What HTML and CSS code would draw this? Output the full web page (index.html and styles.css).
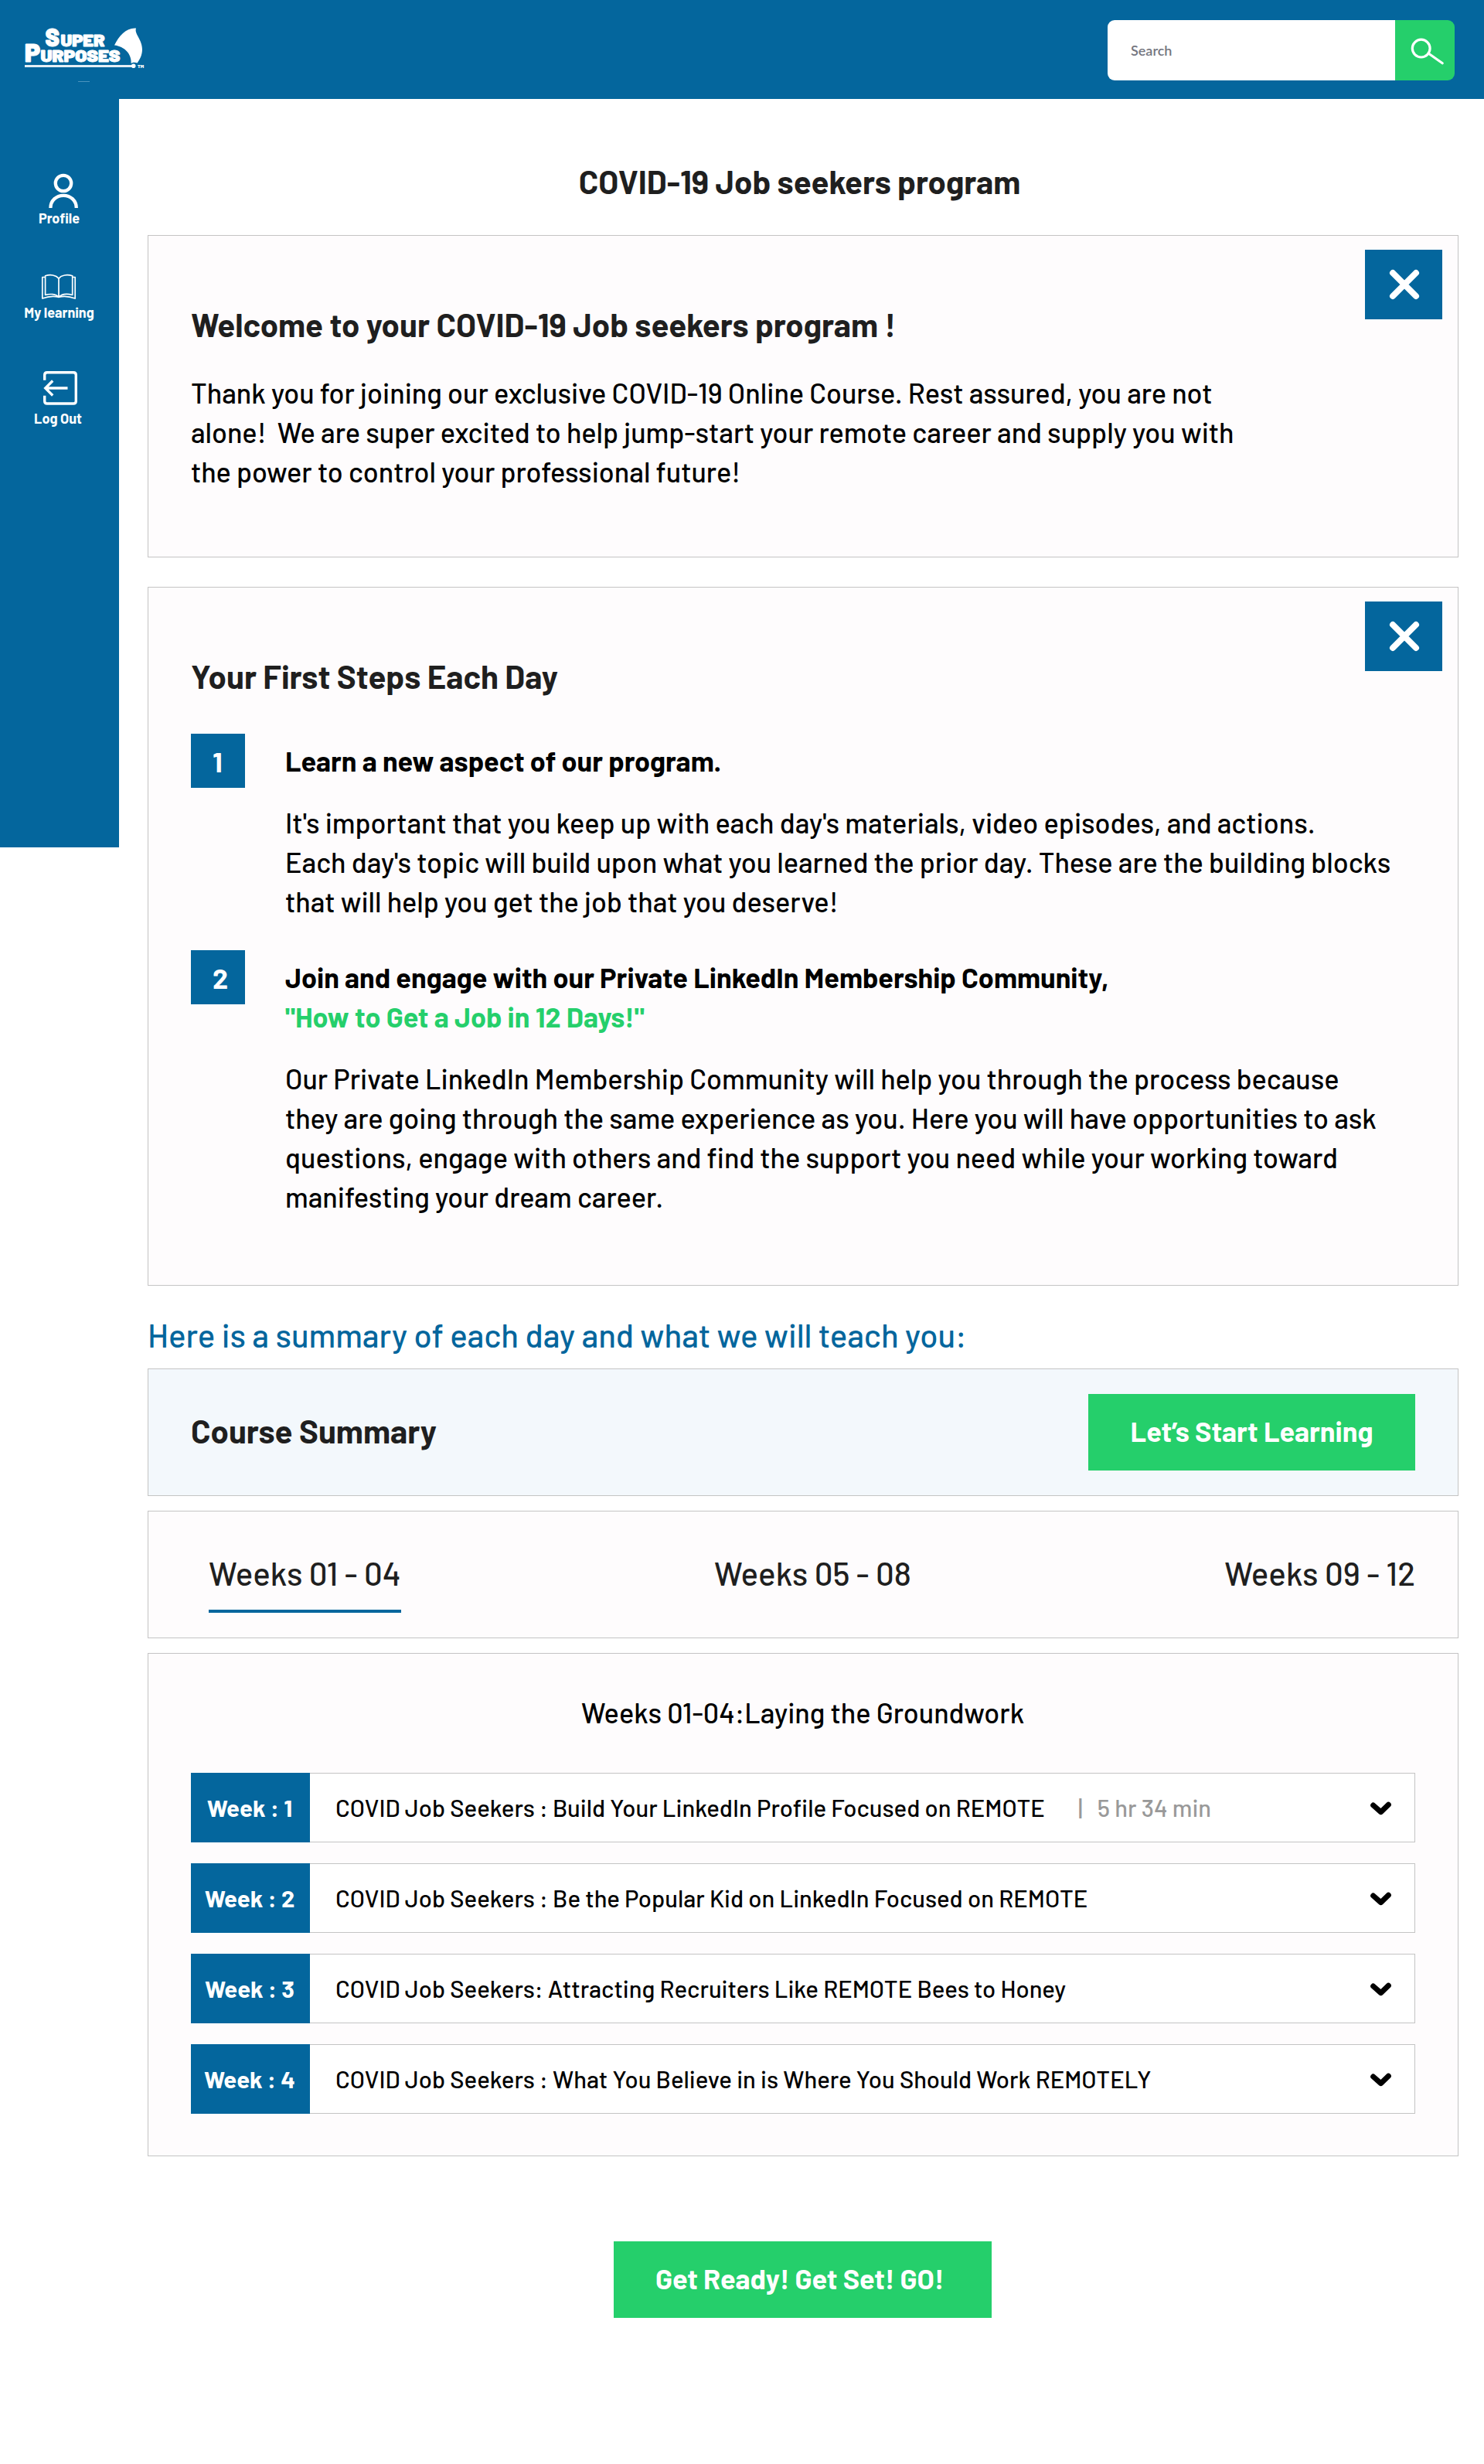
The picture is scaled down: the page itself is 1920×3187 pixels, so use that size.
FILE: index.html
```html
<!DOCTYPE html>
<html lang="en">
<head>
<meta charset="utf-8">
<title>COVID-19 Job seekers program</title>
<link rel="stylesheet" href="styles.css">
</head>
<body>
<header class="topbar">
  <svg class="logo" width="200" height="128" viewBox="0 0 200 128" role="img" aria-label="Super Purposes">
    <g class="logo-text">
      <text y="59.5"><tspan x="58.500" font-size="31.5" textLength="18.5" lengthAdjust="spacingAndGlyphs">S</tspan><tspan x="78.500" font-size="21" textLength="57" lengthAdjust="spacingAndGlyphs">UPER</tspan></text>
      <text y="79.5"><tspan x="32" font-size="31" textLength="20" lengthAdjust="spacingAndGlyphs">P</tspan><tspan x="52.500" font-size="21" textLength="103" lengthAdjust="spacingAndGlyphs">URPOSES</tspan></text>
      <text class="logo-tm" x="178" y="88" font-size="5.5" textLength="8" lengthAdjust="spacingAndGlyphs">TM</text>
    </g>
    <path fill="#fff" d="M148 58.600C154 46 164 35.500 176 36.600C173.500 44 184 51 184 64C184 71 181 77 177.500 81.500C175 80.300 172 80.300 169.700 82C170.500 70 161 60 148 58.600Z"/>
    <rect x="32" y="84" width="139" height="3" fill="#e4eef5"/>
    <circle cx="172.700" cy="85.300" r="2.800" fill="#fff"/>
    <rect x="101" y="105" width="15" height="1" fill="#4a94bd"/>
  </svg>
  <form class="search">
    <span class="search-field">Search</span>
    <span class="search-button">
      <svg width="77" height="78" viewBox="0 0 77 78" fill="none" stroke="#fff" stroke-linecap="round">
        <circle cx="33.700" cy="36.600" r="11.400" stroke-width="3.200"/>
        <path d="M44.500 44L61.200 55.800" stroke-width="3.200"/>
      </svg>
    </span>
  </form>
</header>

<div class="layout">
  <nav class="sidebar">
    <a class="nav-item nav-profile">
      <svg width="48" height="47" viewBox="58 224 48 47" fill="none" stroke="#fff" stroke-width="4.300">
        <circle cx="82" cy="237" r="10.200"/>
        <path d="M65.400 269C65.400 259.500 72.700 252.800 82.100 252.800S98.800 259.500 98.800 269"/>
      </svg>
      <span>Profile</span>
    </a>
    <a class="nav-item nav-learning">
      <svg width="48" height="34" viewBox="52 354 48 34" fill="none" stroke="#fff" stroke-width="1.700" stroke-linejoin="round">
        <path d="M76 360.200C72.500 355.500 65 354.800 58.600 356.700V381.500C64.500 379.800 72 380 76 384.300C80 380 87.500 379.800 93.700 381.500V356.700C87 354.800 79.500 355.500 76 360.200V384.300"/>
        <path d="M58.600 358.500H54.800V386C61.500 383.600 70 382.800 76 384.300C82 382.800 90.500 383.600 97.200 386V358.500H93.700"/>
      </svg>
      <span>My learning</span>
    </a>
    <a class="nav-item nav-logout">
      <svg width="48" height="46" viewBox="54 479 48 46" fill="none" stroke="#fff">
        <path stroke-width="3.400" d="M57.700 491.700V485Q57.700 481.700 61 481.700H95Q98.300 481.700 98.300 485V518.700Q98.300 522 95 522H61Q57.700 522 57.700 518.700V511.700"/>
        <path stroke-width="3.300" d="M87.500 502H59M68.200 492.500L58.700 502L68.200 511.500"/>
      </svg>
      <span>Log Out</span>
    </a>
  </nav>

  <main class="content">
    <h1 class="page-title">COVID-19 Job seekers program</h1>

    <section class="card intro">
      <button class="close" aria-label="Close"><svg width="40" height="40" viewBox="0 0 40 40" stroke="#fff" stroke-width="8" stroke-linecap="round"><path d="M5 5L35 35M35 5L5 35"/></svg></button>
      <h2>Welcome to your COVID-19 Job seekers program !</h2>
      <p>Thank you for joining our exclusive COVID-19 Online Course. Rest assured, you are not<br>alone!&nbsp; We are super excited to help jump-start your remote career and supply you with<br>the power to control your professional future!</p>
    </section>

    <section class="card first-steps">
      <button class="close" aria-label="Close"><svg width="40" height="40" viewBox="0 0 40 40" stroke="#fff" stroke-width="8" stroke-linecap="round"><path d="M5 5L35 35M35 5L5 35"/></svg></button>
      <h2>Your First Steps Each Day</h2>
      <ol class="steps">
        <li class="step">
          <span class="step-number">1</span>
          <div class="step-body">
            <h3>Learn a new aspect of our program.</h3>
            <p>It's important that you keep up with each day's materials, video episodes, and actions.<br>Each day's topic will build upon what you learned the prior day. These are the building blocks<br>that will help you get the job that you deserve!</p>
          </div>
        </li>
        <li class="step">
          <span class="step-number">2</span>
          <div class="step-body">
            <h3>Join and engage with our Private LinkedIn Membership Community,<br><a class="accent">"How to Get a Job in 12 Days!"</a></h3>
            <p>Our Private LinkedIn Membership Community will help you through the process because<br>they are going through the same experience as you. Here you will have opportunities to ask<br>questions, engage with others and find the support you need while your working toward<br>manifesting your dream career.</p>
          </div>
        </li>
      </ol>
    </section>

    <p class="summary-lead">Here is a summary of each day and what we will teach you:</p>

    <section class="card course-summary">
      <h2>Course Summary</h2>
      <button class="cta cta-start">Let’s Start Learning</button>
    </section>

    <div class="card tabs">
      <a class="tab tab-active">Weeks 01 - 04</a>
      <a class="tab">Weeks 05 - 08</a>
      <a class="tab">Weeks 09 - 12</a>
    </div>

    <section class="card weeks">
      <h3 class="weeks-title">Weeks 01-04:Laying the Groundwork</h3>
      <div class="week">
        <span class="week-label">Week : 1</span>
        <div class="week-body">
          <span>COVID Job Seekers : Build Your LinkedIn Profile Focused on REMOTE</span>
          <span class="week-bar">|</span>
          <span class="week-time">5 hr 34 min</span>
          <svg class="chevron" width="27" height="18" viewBox="0 0 27 18"><path d="M3.700 5L13.500 13.700L23.300 4.200"/></svg>
        </div>
      </div>
      <div class="week">
        <span class="week-label">Week : 2</span>
        <div class="week-body">
          <span>COVID Job Seekers : Be the Popular Kid on LinkedIn Focused on REMOTE</span>
          <svg class="chevron" width="27" height="18" viewBox="0 0 27 18"><path d="M3.700 5L13.500 13.700L23.300 4.200"/></svg>
        </div>
      </div>
      <div class="week">
        <span class="week-label">Week : 3</span>
        <div class="week-body">
          <span>COVID Job Seekers: Attracting Recruiters Like REMOTE Bees to Honey</span>
          <svg class="chevron" width="27" height="18" viewBox="0 0 27 18"><path d="M3.700 5L13.500 13.700L23.300 4.200"/></svg>
        </div>
      </div>
      <div class="week">
        <span class="week-label">Week : 4</span>
        <div class="week-body">
          <span>COVID Job Seekers : What You Believe in is Where You Should Work REMOTELY</span>
          <svg class="chevron" width="27" height="18" viewBox="0 0 27 18"><path d="M3.700 5L13.500 13.700L23.300 4.200"/></svg>
        </div>
      </div>
    </section>

    <button class="cta cta-go">Get Ready! Get Set! GO!</button>
  </main>
</div>
</body>
</html>
```
FILE: styles.css
```css
* { box-sizing: border-box; }

body {
  margin: 0;
  min-height: 3187px;
  background: #fff;
  color: #000;
  font: 500 36px/51px Barlow, Roboto, sans-serif;
}

h1, h2, h3, p, ol { margin: 0; padding: 0; }
h1, h2 { font-size: 42px; line-height: 50px; font-weight: 700; color: #1f1f1f; }
h3 { font-size: 36px; line-height: 51px; font-weight: 700; }
p, h1, h2, h3 { white-space: nowrap; }
svg { display: block; flex: none; }
button { border: 0; padding: 0; font: inherit; }

/* Top bar */
.topbar {
  display: flex;
  justify-content: space-between;
  align-items: center;
  height: 128px;
  padding-right: 38px;
  background: #04669d;
}
.logo-text { fill: #fff; stroke: #fff; stroke-width: 0.9; font-family: Barlow, Inter, sans-serif; font-weight: 900; }
.logo-tm { stroke: none; }
.search { display: flex; width: 449px; height: 78px; margin-top: 2px; border-radius: 9px; overflow: hidden; }
.search-field {
  display: flex;
  align-items: center;
  width: 372px;
  padding-left: 30px;
  background: #fff;
  color: #74767f;
  font: 600 18px/22px Lato, sans-serif;
}
.search-button { width: 77px; background: #25cf6b; }

/* Sidebar */
.layout { display: flex; align-items: flex-start; }
.sidebar {
  display: flex;
  flex-direction: column;
  flex: none;
  width: 154px;
  height: 968px;
  padding-top: 96px;
  background: #04669d;
}
.nav-item {
  display: flex;
  flex-direction: column;
  align-items: center;
  color: #fff;
  font-size: 18px;
  line-height: 22px;
  font-weight: 700;
}
.nav-profile svg { margin-left: 10px; }
.nav-profile span, .nav-learning span { padding-right: 1px; }
.nav-learning { margin-top: 61px; gap: 5px; }
.nav-learning svg { margin-right: 2px; }
.nav-logout { margin-top: 64px; gap: 5px; }
.nav-logout svg { margin-left: 2px; }
.nav-logout span { padding-right: 4px; }

/* Main column */
.content {
  display: flex;
  flex-direction: column;
  flex: 1;
  padding: 81px 33px 0 37px;
}
.page-title { padding-right: 9px; margin-bottom: 45px; text-align: center; }

.card {
  position: relative;
  border: 1px solid #c4c4c4;
  background: #fefcfd;
}
.close {
  position: absolute;
  top: 18px;
  right: 20px;
  display: flex;
  align-items: center;
  justify-content: center;
  width: 100px;
  height: 90px;
  padding-left: 2px;
  background: #04669d;
}

.intro { padding: 89px 55px 85px; }
.intro h2 { margin-bottom: 38px; }

.first-steps { margin-top: 38px; padding: 89px 55px; }
.steps { display: flex; flex-direction: column; gap: 38px; margin-top: 50px; list-style: none; }
.step { display: grid; grid-template-columns: 70px 1fr; column-gap: 52px; align-items: start; }
.step-number {
  display: flex;
  align-items: center;
  height: 70px;
  padding-left: 28px;
  background: #04669d;
  color: #fff;
  font-weight: 700;
}
.step-body { padding-top: 9px; }
.step-body h3 { margin-bottom: 29px; }
.accent { color: #25cf6b; }

.summary-lead { margin: 38px 0 19px; color: #04669d; font-size: 42px; line-height: 50px; }

.course-summary {
  display: flex;
  align-items: center;
  justify-content: space-between;
  height: 165px;
  padding: 0 55px;
  background: #f3f8fc;
}
.course-summary h2 { padding-bottom: 6px; }
.cta {
  height: 99px;
  padding: 0 0 4px;
  background: #25cf6b;
  color: #fff;
  font-weight: 700;
  white-space: nowrap;
}
.cta-start { width: 423px; }

.tabs {
  display: flex;
  align-items: flex-start;
  justify-content: space-between;
  height: 165px;
  margin-top: 19px;
  padding: 54px 55px 0 78px;
}
.tab { padding-bottom: 23px; color: #1f1f1f; font-size: 42px; line-height: 50px; }
.tab-active { border-bottom: 4px solid #04669d; }

.weeks { display: flex; flex-direction: column; gap: 27px; margin-top: 19px; padding: 50px 55px 54px; }
.weeks-title { margin-bottom: 26px; padding-right: 1px; font-weight: 500; text-align: center; }
.week { display: flex; height: 90px; font-size: 31px; line-height: 38px; white-space: nowrap; }
.week-label {
  display: flex;
  align-items: center;
  justify-content: center;
  width: 154px;
  padding: 0 2px 1px 0;
  background: #04669d;
  color: #fff;
  font-weight: 700;
}
.week-body {
  display: flex;
  align-items: center;
  flex: 1;
  padding: 0 30px 1px 33px;
  border: 1px solid #c4c4c4;
  border-left: 0;
  background: #fff;
}
.week-bar { width: 8px; margin-left: 42px; display: flex; justify-content: center; color: #999; }
.week-time { margin-left: 18px; color: #999; }
.chevron { margin-left: auto; margin-top: 2px; fill: none; stroke: #000; stroke-width: 7; stroke-linecap: round; stroke-linejoin: round; }

.cta-go { align-self: center; width: 489px; margin: 110px 1px 0 0; padding: 0 0 4px 54px; text-align: left; }
```
